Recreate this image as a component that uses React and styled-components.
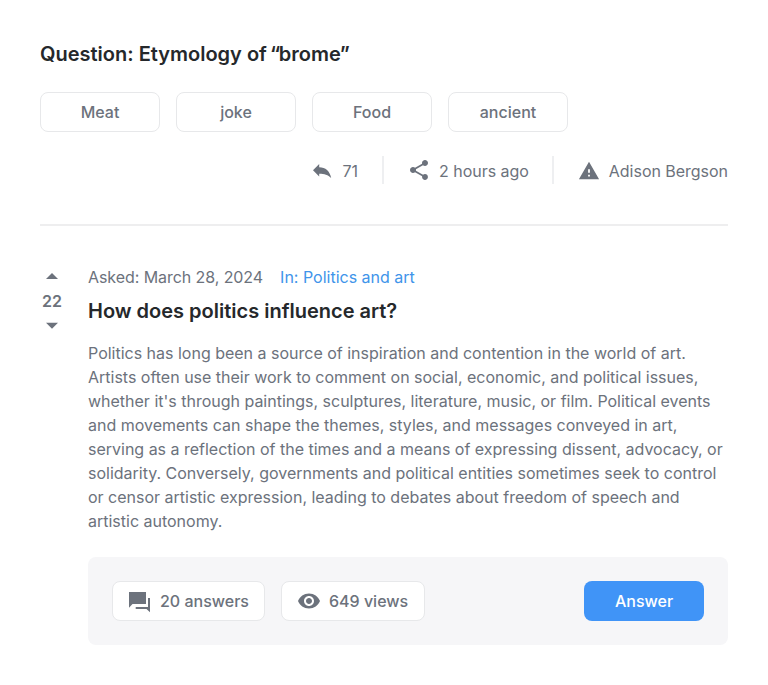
import React from "react";
import styled, { createGlobalStyle } from "styled-components";
import { MdShare, MdWarning, MdVisibility } from "react-icons/md";

const GlobalStyle = createGlobalStyle`
  *, *::before, *::after { box-sizing: border-box; }
  body { margin: 0; background: #fff; font-family: Inter, "Liberation Sans", sans-serif; color: #6c727c; }
  h1, h2, p { margin: 0; }
  svg { flex: none; display: block; }
`;

const Page = styled.main`
  width: 768px;
  height: 685px;
  padding: 40px;
  overflow: hidden;
`;

const Title = styled.h1`
  font-size: 20px;
  line-height: 28px;
  font-weight: 600;
  color: #25282b;
`;

const Kern = styled.span`
  letter-spacing: ${(p) => p.$by}px;
`;

const Tags = styled.div`
  display: flex;
  gap: 16px;
  margin-top: 24px;
`;

const Tag = styled.button`
  width: 120px;
  height: 40px;
  padding: 0;
  border: 1px solid #e7e8ea;
  border-radius: 8px;
  background: #fff;
  color: #6c727c;
  font: 500 16px/24px Inter, sans-serif;
`;

const Meta = styled.div`
  display: flex;
  justify-content: flex-end;
  margin-top: 24px;
  height: 28px;
`;

const MetaItem = styled.div`
  display: flex;
  align-items: center;
  gap: ${(p) => p.$gap ?? 9}px;
  padding: ${(p) => (p.$low ? 2 : 0)}px ${(p) => p.$end ?? 24}px 0 ${(p) => p.$start ?? 24}px;
  font-size: 16px;
  line-height: 24px;
  border-right: 2px solid #eeeff1;
  &:last-child { padding-right: 0; border-right: 0; }
`;

const MetaLabel = styled.span`
  padding-top: ${(p) => (p.$drop ? 2 : 0)}px;
  letter-spacing: -0.03px;
`;

const Divider = styled.hr`
  margin: 40px 0 39px;
  border: 0;
  height: 2px;
  background: #eeeeef;
`;

const Post = styled.article`
  display: flex;
  gap: 24px;
`;

const Votes = styled.div`
  width: 24px;
  display: flex;
  flex-direction: column;
  align-items: center;
  font-size: 16px;
  line-height: 24px;
  font-weight: 600;
`;

const Body = styled.div`
  width: 640px;
`;

const Byline = styled.div`
  display: flex;
  gap: 17px;
  font-size: 16px;
  line-height: 24px;
`;

const Asked = styled.span`
  letter-spacing: -0.07px;
`;

const Topic = styled.span`
  color: #4094ea;
`;

const Heading = styled.h2`
  margin-top: 8px;
  font-size: 20px;
  line-height: 28px;
  font-weight: 600;
  color: #25282b;
`;

const Text = styled.p`
  margin-top: 16px;
  font-size: 16px;
  line-height: 24px;
  letter-spacing: -0.006px;
  white-space: pre-line;
`;

const Footer = styled.footer`
  display: flex;
  align-items: center;
  gap: 16px;
  height: 88px;
  margin-top: 24px;
  padding: 24px;
  border-radius: 8px;
  background: #f6f6f8;
`;

const Stat = styled.div`
  display: flex;
  align-items: center;
  gap: 8px;
  width: ${(p) => p.$width}px;
  height: 40px;
  padding-left: 15px;
  border: 1px solid #e7e8ea;
  border-radius: 8px;
  background: #fff;
  font-size: 16px;
  font-weight: 500;
  white-space: nowrap;
`;

const Answer = styled.button`
  width: 120px;
  height: 40px;
  margin-left: auto;
  border: 0;
  border-radius: 8px;
  background: #4094f7;
  color: #fff;
  font: 500 16px/24px Inter, sans-serif;
`;

const Icon = ({ d }) => (
  <svg width="24" height="24" viewBox="0 0 24 24" fill="currentColor" aria-hidden="true">
    <path d={d} />
  </svg>
);

const icons = {
  reply: "M3 11.2L9.2 5v3.2c6.3 0 10.6 3.8 12 10.8-3.2-3.3-6.7-4.3-12-4.3v2.7z",
  answers: "M1 3h17v12H4.5L1 18.7zM20 9h2v14.3L18.5 20H7.7v-2H20z",
  up: "M6 14l6-6 6 6z",
  down: "M6 9.8l6 6 6-6z",
};

const paragraph = `Politics has long been a source of inspiration and contention in the world of art.
Artists often use their work to comment on social, economic, and political issues,
whether it's through paintings, sculptures, literature, music, or film. Political events
and movements can shape the themes, styles, and messages conveyed in art,
serving as a reflection of the times and a means of expressing dissent, advocacy, or
solidarity. Conversely, governments and political entities sometimes seek to control
or censor artistic expression, leading to debates about freedom of speech and
artistic autonomy.`;

export default function App() {
  return (
    <Page>
      <GlobalStyle />
      <Title>
        Question: Etymology of<Kern $by={-2}> </Kern><Kern $by={-1.2}>“</Kern>brom<Kern $by={-1}>e</Kern>”
      </Title>
      <Tags>
        {["Meat", "joke", "Food", "ancient"].map((t) => <Tag key={t}>{t}</Tag>)}
      </Tags>
      <Meta>
        <MetaItem $low><Icon d={icons.reply} /><MetaLabel>71</MetaLabel></MetaItem>
        <MetaItem $gap={8} $start={23} $end={23}><MdShare size={24} /><MetaLabel $drop>2 hours ago</MetaLabel></MetaItem>
        <MetaItem $low><MdWarning size={22} /><MetaLabel>Adison Bergson</MetaLabel></MetaItem>
      </Meta>
      <Divider />
      <Post>
        <Votes>
          <Icon d={icons.up} />
          22
          <Icon d={icons.down} />
        </Votes>
        <Body>
          <Byline><Asked>Asked: March 28, 2024</Asked><Topic>In: Politics and art</Topic></Byline>
          <Heading>How does politics influence art?</Heading>
          <Text>{paragraph}</Text>
          <Footer>
            <Stat $width={153}><Icon d={icons.answers} />20 answers</Stat>
            <Stat $width={144}><MdVisibility size={24} />649 views</Stat>
            <Answer>Answer</Answer>
          </Footer>
        </Body>
      </Post>
    </Page>
  );
}
